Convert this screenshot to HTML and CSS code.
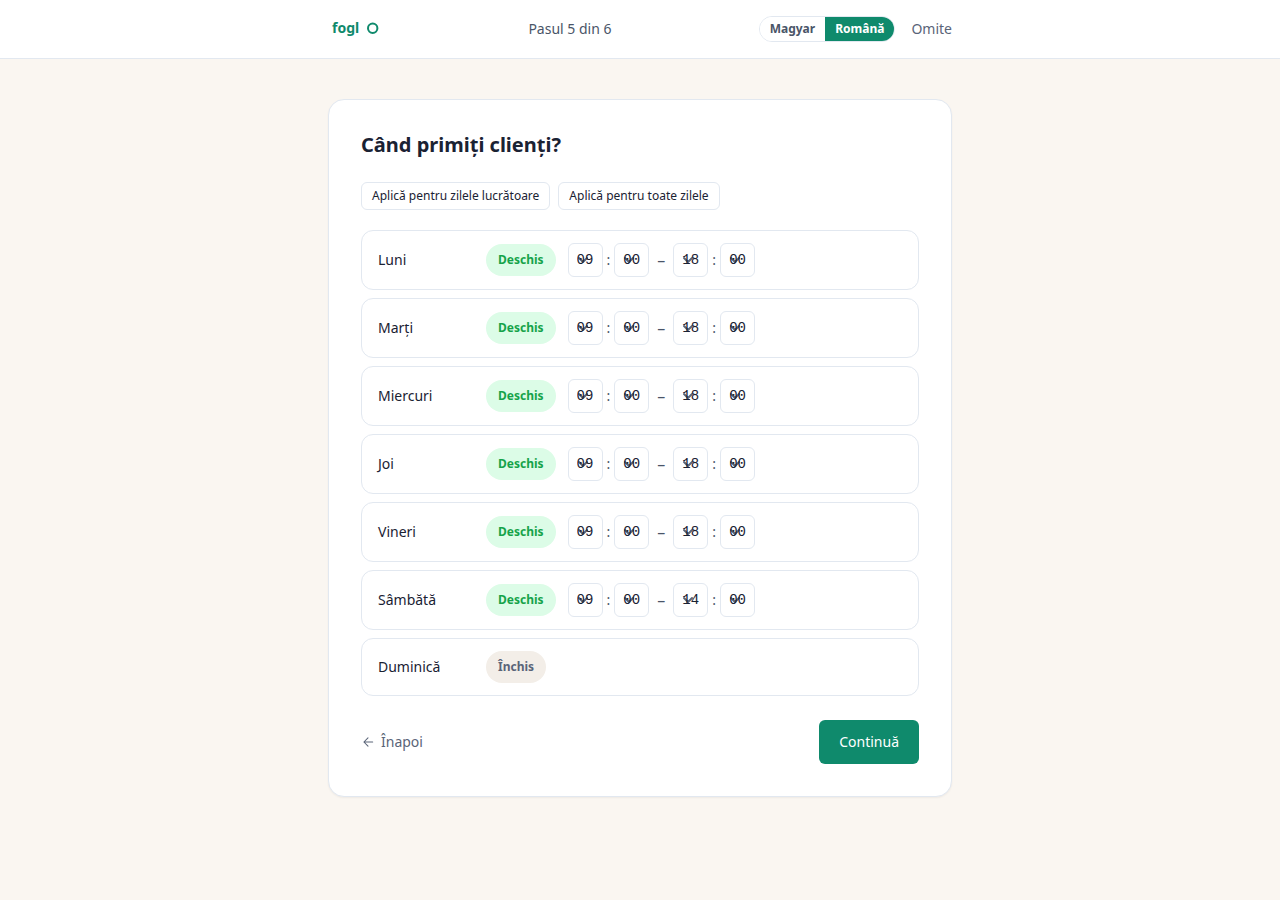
FILE: index.html
```html
<!DOCTYPE html>
<html lang="ro">
<head>
    <meta charset="UTF-8">
    <meta name="viewport" content="width=device-width, initial-scale=1.0">
    <title>Când primiți clienți?</title>
    <link rel="stylesheet" href="styles.css">
</head>
<body>
    <header class="topbar">
        <div class="topbar-inner">
            <a class="logo" href="#">
                <span>fogl</span>
                <svg width="12" height="12" viewBox="0 0 12 12" fill="none" aria-hidden="true">
                    <circle cx="5.7" cy="6.3" r="4.7" stroke="currentColor" stroke-width="2"/>
                </svg>
            </a>
            <span class="step">Pasul 5 din 6</span>
            <div class="topbar-actions">
                <div class="lang" role="group" aria-label="Limba">
                    <button type="button">Magyar</button>
                    <button type="button" class="active">Română</button>
                </div>
                <a class="skip" href="#">Omite</a>
            </div>
        </div>
    </header>

    <main class="container">
        <form class="card" id="hoursForm">
            <h1>Când primiți clienți?</h1>

            <div class="presets">
                <button type="button">Aplică pentru zilele lucrătoare</button>
                <button type="button">Aplică pentru toate zilele</button>
            </div>

            <!-- Filled in from the days list in script.js -->
            <ul class="days" id="days"></ul>

            <div class="card-footer">
                <a class="back" href="#">
                    <svg width="14" height="14" viewBox="0 0 24 24" fill="none" stroke="currentColor" stroke-width="1.8" stroke-linecap="round" stroke-linejoin="round" aria-hidden="true">
                        <path d="M20 12H5M12 5l-7 7 7 7"/>
                    </svg>
                    Înapoi
                </a>
                <button type="submit" class="continue">Continuă</button>
            </div>
        </form>
    </main>

    <script src="script.js"></script>
</body>
</html>
```

FILE: styles.css
```css
/* General Styles */
* {
    box-sizing: border-box;
}

body {
    margin: 0;
    min-height: 100vh;
    background-color: #faf6f1;
    color: #1a2233;
    font-family: "Noto Sans", sans-serif;
    font-size: 14px;
    line-height: 20px;
}

button, select {
    font: inherit;
    color: inherit;
    cursor: pointer;
}

a {
    color: inherit;
    text-decoration: none;
}

/* Top bar */
.topbar {
    background: #fff;
    border-bottom: 1px solid #e2e8f0;
}

.topbar-inner {
    display: flex;
    align-items: center;
    justify-content: space-between;
    max-width: 624px;
    margin: 0 auto;
    padding: 16px 0;
}

.logo {
    display: flex;
    align-items: center;
    gap: 8px;
    padding: 0 2px 2px 4px;
    color: #0f8a6c;
    font-weight: 700;
}

.step {
    color: #4a5568;
}

.topbar-actions {
    display: flex;
    align-items: center;
    gap: 16px;
}

.lang {
    display: flex;
    overflow: hidden;
    border: 1px solid #e2e8f0;
    border-radius: 16px;
}

.lang button {
    padding: 4px 10px;
    border: none;
    background: #fff;
    color: #4a5568;
    font-size: 12px;
    font-weight: 700;
    line-height: 16px;
}

.lang .active {
    background: #0f8a6c;
    color: #fff;
}

.skip, .back {
    color: #5a6478;
}

/* Card */
.container {
    max-width: 624px;
    margin: 0 auto;
    padding: 40px 0;
}

.card {
    padding: 32px;
    background: #fff;
    border: 1px solid #e2e8f0;
    border-radius: 16px;
    box-shadow: 0 1px 2px rgba(0, 0, 0, 0.05);
}

h1 {
    margin: 0 0 24px;
    font-size: 20px;
    font-weight: 700;
    line-height: 26px;
}

.presets {
    display: flex;
    flex-wrap: wrap;
    gap: 8px;
    margin-bottom: 20px;
}

.presets button {
    padding: 5px 10px;
    background: #fff;
    border: 1px solid #e2e8f0;
    border-radius: 6px;
    font-size: 12px;
    line-height: 16px;
}

/* Opening hours */
.days {
    display: flex;
    flex-direction: column;
    gap: 8px;
    margin: 0;
    padding: 0;
    list-style: none;
}

.day {
    display: flex;
    align-items: center;
    gap: 12px;
    padding: 12px 16px;
    border: 1px solid #e2e8f0;
    border-radius: 12px;
}

.day-name {
    width: 96px;
}

.status {
    padding: 8px 12px;
    border: none;
    border-radius: 16px;
    background: #f3eee8;
    color: #5a6478;
    font-size: 12px;
    font-weight: 700;
    line-height: 16px;
}

.status.open {
    background: #dcfce7;
    color: #16a34a;
}

.hours {
    display: flex;
    align-items: center;
    gap: 8px;
    color: #4a5568;
    font-size: 16px;
}

.time {
    display: flex;
    align-items: center;
    gap: 4px;
    font-size: 14px;
}

.time select {
    appearance: none;
    height: 34px;
    padding: 0 8px;
    border: 1px solid #e2e8f0;
    border-radius: 6px;
    background: #fff url("data:image/svg+xml,%3Csvg xmlns='http://www.w3.org/2000/svg' width='16' height='16' viewBox='0 0 16 16' fill='none' stroke='%235a6478' stroke-width='2' stroke-linecap='round' stroke-linejoin='round'%3E%3Cpath d='M4 6l4 4 4-4'/%3E%3C/svg%3E") no-repeat right 11px center;
    color: #1a2233;
    font-family: "Liberation Mono", monospace;
    font-size: 14px;
}

/* Footer */
.card-footer {
    display: flex;
    align-items: center;
    justify-content: space-between;
    margin-top: 24px;
}

.back {
    display: flex;
    align-items: center;
    gap: 6px;
}

.continue {
    padding: 12px 20px;
    border: none;
    border-radius: 6px;
    background: #0f8a6c;
    color: #fff;
}
```

FILE: script.js
```javascript
const days = [
    { name: "Luni", from: "09:00", to: "18:00" },
    { name: "Marți", from: "09:00", to: "18:00" },
    { name: "Miercuri", from: "09:00", to: "18:00" },
    { name: "Joi", from: "09:00", to: "18:00" },
    { name: "Vineri", from: "09:00", to: "18:00" },
    { name: "Sâmbătă", from: "09:00", to: "14:00" },
    { name: "Duminică" }
];

// Build one drop-down, counting up to max in the given step
function timeSelect(label, max, step, value) {
    let options = "";
    for (let i = 0; i < max; i += step) {
        const text = String(i).padStart(2, "0");
        options += `<option${text === value ? " selected" : ""}>${text}</option>`;
    }
    return `<select aria-label="${label}">${options}</select>`;
}

function timePicker(label, time) {
    const [hour, minute] = time.split(":");
    return `
        <span class="time">
            ${timeSelect(label + " ora", 24, 1, hour)}
            <span>:</span>
            ${timeSelect(label + " minute", 60, 15, minute)}
        </span>
    `;
}

const list = document.getElementById("days");
days.forEach((day) => {
    const li = document.createElement("li");
    li.className = "day";
    li.innerHTML = `
        <span class="day-name">${day.name}</span>
        <button type="button" class="status ${day.from ? "open" : ""}">${day.from ? "Deschis" : "Închis"}</button>
    `;
    if (day.from) {
        li.innerHTML += `
            <div class="hours">
                ${timePicker(day.name + " de la", day.from)}
                <span>–</span>
                ${timePicker(day.name + " până la", day.to)}
            </div>
        `;
    }
    list.appendChild(li);
});

document.getElementById("hoursForm").addEventListener("submit", (e) => {
    e.preventDefault();
});
```
